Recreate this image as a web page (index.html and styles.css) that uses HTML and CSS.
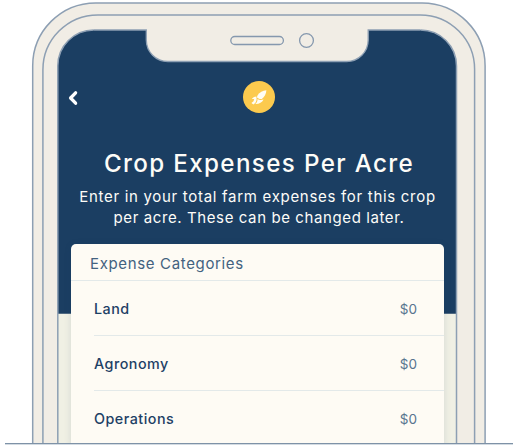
FILE: index.html
```html
<!DOCTYPE html>
<html lang="en">
<head>
<meta charset="utf-8">
<title>Crop Expenses Per Acre</title>
<link rel="stylesheet" href="styles.css">
</head>
<body>
<div class="stage">
  <svg class="phone" width="518" height="445" viewBox="0 0 518 445" aria-hidden="true">
    <path class="shell" d="M32.7 460V66A63 63 0 0 1 95.7 2.9H422A63 63 0 0 1 485.1 66V460"/>
    <path class="shell" d="M42.9 460V70A55 55 0 0 1 97.9 14.9H420A54.5 54.5 0 0 1 474.6 70V460"/>
    <path class="screen-base" d="M57.8 460V66A36 36 0 0 1 93.8 30H420.5A36 36 0 0 1 456.5 66V460"/>
    <path class="screen-top" d="M57.8 313.7V66A36 36 0 0 1 93.8 30H146.3V40A21.5 21.5 0 0 0 167.8 61.5H346.7A21.5 21.5 0 0 0 368.2 40V30H420.5A36 36 0 0 1 456.5 66V313.7Z"/>
    <path class="notch" d="M146.3 30V40A21.5 21.5 0 0 0 167.8 61.5H346.7A21.5 21.5 0 0 0 368.2 40V30"/>
    <path class="notch-line" d="M93.8 30H146.3V40A21.5 21.5 0 0 0 167.8 61.5H346.7A21.5 21.5 0 0 0 368.2 40V30H420.5"/>
    <path class="edge" d="M57.8 460V66A36 36 0 0 1 93.8 30M420.5 30A36 36 0 0 1 456.5 66V460"/>
    <rect class="detail" x="230.8" y="36.5" width="52.6" height="8" rx="4"/>
    <circle class="detail" cx="306.5" cy="40.5" r="6.9"/>
  </svg>
  <main class="screen">
    <nav class="topbar">
      <svg class="back" width="12" height="16" viewBox="0 0 12 16"><path d="M8.6 2.8L3.6 8L8.6 13.2"/></svg>
      <span class="badge">
        <svg width="18" height="18" viewBox="0 0 18 18">
          <path d="M16.4 2.2C12.6 2.6 9.6 4.2 7.6 7.2L6.9 9.2C8 10.6 9.6 11.1 11.8 10.9C14.4 9 16.3 5.8 16.4 2.2Z"/>
          <path d="M6.3 8.4C4.5 8.5 3 9.4 1.8 11L4.2 11.1L3.5 13.2L1.4 15.1L3.4 16.6L5.2 15C6.6 13.4 6.9 10.8 6.3 8.4Z"/>
          <path d="M7.5 10.9C7.6 13 7 14.4 5.3 16C9 16.2 12 14.6 13.6 11.5C11 12.3 9 12.1 7.5 10.9Z"/>
        </svg>
      </span>
    </nav>
    <header class="intro">
      <h1>Crop Expenses Per Acre</h1>
      <p><span class="line one">Enter in your total farm expenses for this crop</span> <span class="line two">per acre. These can be changed later.</span></p>
    </header>
    <section class="card">
      <h2>Expense Categories</h2>
      <ul>
        <li><span class="name">Land</span><span class="amount">$0</span></li>
        <li><span class="name">Agronomy</span><span class="amount">$0</span></li>
        <li><span class="name">Operations</span><span class="amount">$0</span></li>
      </ul>
    </section>
  </main>
  <div class="ground"></div>
</div>
</body>
</html>
```
FILE: styles.css
```css
* { box-sizing: border-box; }
body {
  margin: 0;
  background: #fff;
  font-family: Inter, "Liberation Sans", sans-serif;
  overflow: hidden;
}
.stage {
  display: grid;
  width: 518px;
  height: 445px;
  overflow: hidden;
  position: relative;
}
.phone, .screen { grid-area: 1 / 1; }
.shell { fill: #f1ede5; stroke: #8d9fb3; stroke-width: 1.5; }
.screen-base { fill: #f0f0e4; }
.screen-top { fill: #1b3e62; }
.notch { fill: #f1ede5; }
.notch-line { fill: none; stroke: #8d9fb3; stroke-width: 1.3; }
.edge { fill: none; stroke: #8d9fb3; stroke-width: 1.5; }
.detail { fill: none; stroke: #8598ae; stroke-width: 1.3; }
.screen {
  display: flex;
  flex-direction: column;
  margin: 0 74px 0 71px;
  height: 445px;
  padding-top: 81px;
}
.topbar {
  display: grid;
  flex: none;
  grid-template-columns: 1fr auto 1fr;
  align-items: center;
  height: 32px;
  width: 376px;
}
.back { margin-left: -4px; margin-top: 2px; fill: none; stroke: #fff; stroke-width: 3.3; stroke-linecap: round; stroke-linejoin: round; }
.badge {
  display: grid;
  place-items: center;
  width: 32px;
  height: 32px;
  border-radius: 50%;
  background: #fcca4e;
}
.badge svg { fill: #fffdf5; }
.intro { flex: none; color: #fdfcf8; text-align: center; padding-top: 35px; height: 131.4px; white-space: nowrap; }
h1 { margin: 0 -10px; font-size: 24.2px; line-height: 32px; font-weight: 450; letter-spacing: 1.35px; }
p { margin: 7px -10px 0; font-size: 15px; line-height: 20.5px; letter-spacing: 0.6px; }
.line { display: block; }
.one { margin-right: 3px; letter-spacing: 0.7px; }
.card {
  flex: none;
  width: 373px;
  border-radius: 5px 5px 0 0;
  background: #fefbf4;
  box-shadow: 0 1px 7px rgba(27, 62, 98, 0.13);
}
h2 {
  margin: 0;
  height: 36.9px;
  padding: 1px 0 0 19px;
  border-bottom: 1px solid #e3e9e9;
  color: #43627f;
  font-size: 15px;
  line-height: 38px;
  font-weight: 400;
  letter-spacing: 0.65px;
}
ul { list-style: none; margin: 0; padding: 0 0 0 23px; }
li {
  display: flex;
  justify-content: space-between;
  align-items: center;
  height: 55px;
  padding: 1px 27px 0 0;
  border-bottom: 1px solid #e3e9e9;
}
.name { color: #1d4065; font-size: 14.3px; font-weight: 450; letter-spacing: 0.5px; }
.amount { color: #58748f; font-size: 13.5px; }
.ground { position: absolute; left: 5px; right: 5px; top: 443px; height: 2px; border-top: 1px solid #7e92a7; background: #d3dbe2; }
```
